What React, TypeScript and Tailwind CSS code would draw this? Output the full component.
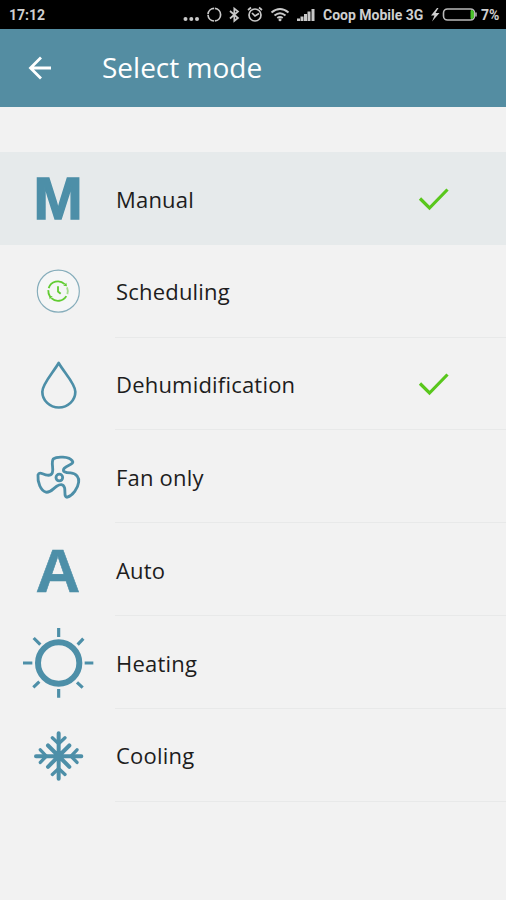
import React, { useState } from 'react';

const TEAL = '#4d8fa8';

const MODES = [
  { id: 'manual', label: 'Manual', icon: ManualIcon },
  { id: 'scheduling', label: 'Scheduling', icon: SchedulingIcon },
  { id: 'dehumidification', label: 'Dehumidification', icon: DropIcon },
  { id: 'fan', label: 'Fan only', icon: FanIcon },
  { id: 'auto', label: 'Auto', icon: AutoIcon },
  { id: 'heating', label: 'Heating', icon: SunIcon },
  { id: 'cooling', label: 'Cooling', icon: SnowIcon },
];

function ManualIcon() {
  return (
    <span className="pt-0.5 font-['Liberation_Sans',sans-serif] text-[59px] leading-[72px] font-bold text-[#4d8fa8] [-webkit-text-stroke:1.4px_#4d8fa8]">M</span>
  );
}

function AutoIcon() {
  return (
    <span className="pt-0.5 font-['Liberation_Sans',sans-serif] text-[62px] leading-[72px] font-bold text-[#4d8fa8] [-webkit-text-stroke:0.6px_#4d8fa8]">A</span>
  );
}

function SchedulingIcon() {
  return (
    <svg className="size-[72px]" viewBox="36 15.6 216 216" fill="none">
      <circle cx="145" cy="124" r="63" fill="#f5f6f6" stroke="#86adbb" strokeWidth="3.5" />
      <g stroke="#62cc33" strokeWidth="5.5">
        <path d="M116 115A29 29 0 0 1 164 103" />
        <path d="M171 113A29 29 0 0 1 172 133" stroke="#a5dd8c" />
        <path d="M169 139A29 29 0 0 1 124 145" />
        <path d="M120 140A29 29 0 0 1 115 121" />
        <path d="M144 109V125L152 132" />
      </g>
      <path d="M160 108L171 109L169 99Z" fill="#62cc33" />
      <path d="M117 138L128 139L119 148Z" fill="#62cc33" />
    </svg>
  );
}

function DropIcon() {
  return (
    <svg className="size-[72px]" viewBox="36 9 216 216" fill="none" stroke={TEAL} strokeWidth="8" strokeLinejoin="round">
      <path d="M146 54C130 82 97 116 97 140A49.500 47.500 0 0 0 196 140C196 116 162 82 146 54Z" />
    </svg>
  );
}

function FanIcon() {
  return (
    <svg className="size-[72px]" viewBox="36 2.4 216 216" fill="none" stroke={TEAL} strokeWidth="8.500" strokeLinejoin="round">
      <path d="M127 98C132 84 122 68 130 56C140 48 178 48 187 62C194 72 172 74 163 84C155 94 165 98 182 98C200 100 208 112 206 126C204 144 188 166 172 171C162 172 166 156 164 144C160 130 150 132 140 138C128 146 122 158 108 156C92 152 82 126 84 104C88 92 100 104 112 105C120 106 124 104 127 98Z" />
      <circle cx="148" cy="112" r="10" />
    </svg>
  );
}

function SunIcon() {
  return (
    <svg className="size-[72px]" viewBox="36 33 216 216" fill="none" stroke={TEAL}>
      <circle cx="146" cy="144" r="62" strokeWidth="18" />
      <path
        strokeWidth="9.500"
        d="M146 39V66M146 222V248M39 144H67M224 144H250M71 69L91 89M220 71L203 89M88 200L70 217M201 202L218 218"
      />
    </svg>
  );
}

function SnowIcon() {
  return (
    <svg className="size-[72px]" viewBox="36 12.6 216 216" fill="none" stroke={TEAL} strokeWidth="12" strokeLinecap="round">
      <path d="M146 55V192M78 124H214M114 92L178 156M178 92L114 156" />
      <path
        strokeWidth="10"
        d="M127 69L146 87L165 69M127 179L146 161L165 179M91 105L109 124L91 143M201 105L183 124L201 143"
      />
    </svg>
  );
}

function StatusBar() {
  return (
    <div className="flex h-[29px] items-center bg-black pl-[9px] font-[Roboto,sans-serif] text-[14px] font-bold text-[#cfcfcf]">
      <span className="w-[174px] leading-none">17:12</span>
      <svg className="h-[18px] w-[140px] shrink-0" viewBox="183 6 140 18" fill="none" stroke="#c9c9c9" strokeWidth="1.7">
        <g fill="#c9c9c9" stroke="none">
          <circle cx="185.500" cy="19" r="2" />
          <circle cx="191.300" cy="19" r="2" />
          <circle cx="197" cy="19" r="2" />
        </g>
        <circle cx="214.300" cy="14.700" r="6.300" strokeDasharray="9 0.900" />
        <path d="M230 11L238 18L234.300 21V8.500L238 11.500L230 18.500" />
        <circle cx="255" cy="15" r="6" />
        <path d="M252 13L255 16L259 13.500M248 10L251 7.500M262 10L259 7.500" />
        <path d="M271.500 12.500Q280 5.500 288.500 12.500M274.500 15.500Q280 11 285.500 15.500M277.300 18Q280 16 282.700 18" strokeWidth="2" />
        <circle cx="280" cy="19.800" r="1.500" fill="#c9c9c9" stroke="none" />
        <path d="M298.500 21V18.500M302 21V16.500M305.500 21V14M309 21V11.500M313 21V9" strokeWidth="3" />
      </svg>
      <span className="w-[108px] shrink-0 leading-none whitespace-nowrap">Coop Mobile 3G</span>
      <svg className="h-[18px] w-[50px] shrink-0" viewBox="431 6 50 18" fill="none">
        <path d="M437 8L431 15.500H434.500L432 21.500L439.500 13H435.500L438.500 8Z" fill="#cfcfcf" />
        <rect x="443.500" y="9" width="31" height="11" rx="4" stroke="#b9b9b9" strokeWidth="1.600" />
        <path d="M471 10.500H472.500Q473.500 11 473.500 13V16Q473.500 18 472.500 18.500H471Z" fill="#4dc42c" stroke="#4dc42c" />
        <path d="M476 12.500V16.500" stroke="#b9b9b9" strokeWidth="1.500" />
      </svg>
      <span className="leading-none">7%</span>
    </div>
  );
}

export default function App() {
  const [selected, setSelected] = useState('manual');
  const enabled = ['manual', 'dehumidification'];

  return (
    <div className="flex h-[900px] w-[506px] flex-col overflow-hidden bg-[#f2f2f2] font-['Open_Sans',sans-serif]">
      <StatusBar />

      {/* App bar */}
      <header className="flex h-[78px] shrink-0 items-center bg-[#548da2] pl-7 text-white">
        <svg className="h-6 w-[74px]" viewBox="0 0 74 24" fill="none" stroke="#ffffff" strokeWidth="2.800">
          <path d="M13 1.500L2.500 12L13 22.500M2.500 12H23" />
        </svg>
        <h1 className="pb-0.5 text-[28px] leading-none">Select mode</h1>
      </header>

      {/* Mode list */}
      <ul className="mt-[45px] flex flex-col">
        {MODES.map((mode) => {
          const Icon = mode.icon;
          const isSelected = mode.id === selected;

          return (
            <li
              key={mode.id}
              onClick={() => setSelected(mode.id)}
              className={`flex h-[92.8px] shrink-0 cursor-pointer ${isSelected ? 'bg-[#e6eaeb]' : ''}`}
            >
              <div className="flex w-[115px] shrink-0 items-center justify-center pl-px">
                <Icon />
              </div>
              <div className={`flex flex-1 items-center justify-between border-b pt-[1.5px] pr-[57px] pl-px ${isSelected ? 'border-transparent' : 'border-[#e8e9e9]'}`}>
                <span className="text-[22px] leading-none tracking-[0.2px] text-[#1d1d1d]">{mode.label}</span>
                {enabled.includes(mode.id) && (
                  <svg className="h-6 w-[31px]" viewBox="0 0 31 24" fill="none" stroke="#59c71c" strokeWidth="3.2">
                    <path d="M2 11.500L11.500 21L29.500 2.500" />
                  </svg>
                )}
              </div>
            </li>
          );
        })}
      </ul>
    </div>
  );
}
